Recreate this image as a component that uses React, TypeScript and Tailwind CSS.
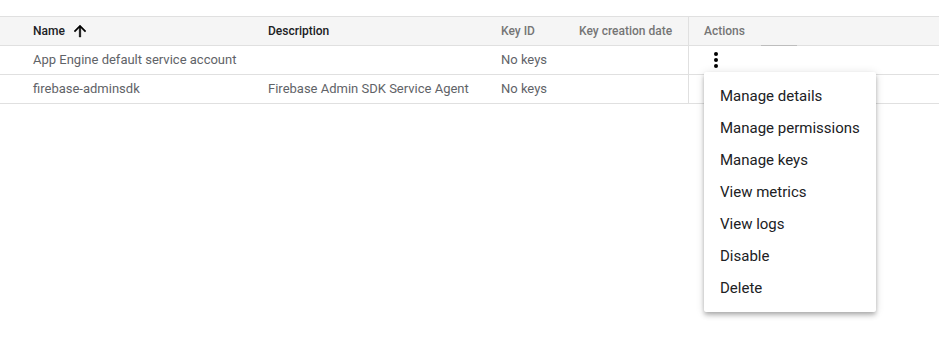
import React from "react";

const rows = [
  { name: "App Engine default service account", desc: "", keyId: "No keys", date: "" },
  { name: "firebase-adminsdk", desc: "Firebase Admin SDK Service Agent", keyId: "No keys", date: "" },
];

const menuItems = [
  "Manage details",
  "Manage permissions",
  "Manage keys",
  "View metrics",
  "View logs",
  "Disable",
  "Delete",
];

const App = () => {
  return (
    <div
      className="relative w-[939px] h-[351px] bg-white overflow-hidden"
      style={{ fontFamily: "Roboto, 'Liberation Sans', sans-serif" }}
    >
      <div className="pt-4">
        {/* header */}
        <div className="flex h-[30px] border-y border-[#e0e0e0] bg-[#f5f5f5] text-[12px] font-medium">
          <div className="pl-[33px] w-[268px] flex items-center text-[#202124]">
            Name
            <svg width="18" height="18" viewBox="0 0 24 24" className="ml-[6px]">
              <path
                d="M4 12l1.41 1.41L11 7.83V20h2V7.83l5.58 5.59L20 12l-8-8-8 8z"
                fill="#000"
                stroke="#000"
                strokeWidth="0.6"
              />
            </svg>
          </div>
          <div className="w-[233px] flex items-center text-[#202124]">Description</div>
          <div className="w-[78px] flex items-center text-[#757575]">Key ID</div>
          <div className="w-[109px] flex items-center text-[#757575]">Key creation date</div>
          <div className="relative flex-1 flex items-center pl-[15px] border-l border-[#e0e0e0] text-[#757575]">
            Actions
            <div className="absolute left-[72px] bottom-[-1px] h-px w-[36px] bg-[#bdbdbd]" />
          </div>
        </div>
        {/* rows */}
        {rows.map((r, i) => (
          <div key={i} className="flex h-[29px] border-b border-[#e0e0e0] text-[13px] text-[#5f6368]">
            <div className="pl-[33px] w-[268px] flex items-center">{r.name}</div>
            <div className="w-[233px] flex items-center">{r.desc}</div>
            <div className="w-[78px] flex items-center">{r.keyId}</div>
            <div className="w-[109px] flex items-center">{r.date}</div>
            <div className="flex-1 flex items-center pl-[24px] border-l border-[#e0e0e0]">
              {i === 0 && (
                <svg width="6" height="16" viewBox="0 0 6 16">
                  <circle cx="3" cy="2" r="2" fill="#000" />
                  <circle cx="3" cy="8" r="2" fill="#000" />
                  <circle cx="3" cy="14" r="2" fill="#000" />
                </svg>
              )}
            </div>
          </div>
        ))}
      </div>

      {/* menu */}
      <div className="absolute left-[704px] top-[72px] w-[172px] bg-white py-2 rounded-[2px] shadow-[0_2px_4px_-1px_rgba(0,0,0,0.2),0_4px_5px_0_rgba(0,0,0,0.14),0_1px_10px_0_rgba(0,0,0,0.12)]">
        {menuItems.map((m) => (
          <div key={m} className="h-8 flex items-center px-4 text-[15px] text-[#202124]">
            {m}
          </div>
        ))}
      </div>
    </div>
  );
};

export default App;
